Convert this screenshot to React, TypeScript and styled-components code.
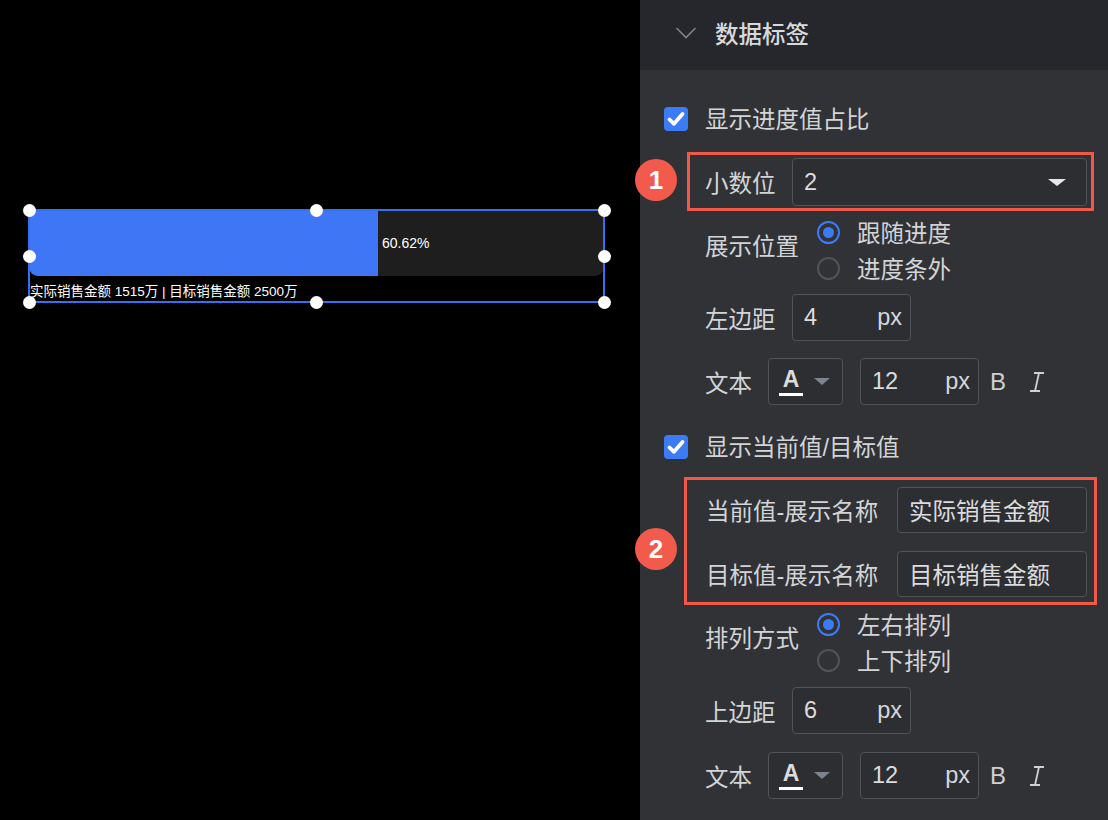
import React from "react";
import styled, { createGlobalStyle } from "styled-components";

const Global = createGlobalStyle`
  html, body { margin: 0; padding: 0; background: #000; }
  body { font-family: "Liberation Sans", "Noto Sans CJK SC", sans-serif; }
  * { box-sizing: border-box; }
`;

const Page = styled.div`
  display: flex;
  width: 1108px;
  height: 820px;
  overflow: hidden;
`;

/* ---------- canvas ---------- */
const Canvas = styled.div`
  width: 640px;
  height: 820px;
  background: #000;
  padding: 210px 0 0 29px;
`;

const Widget = styled.div`
  position: relative;
  width: 575px;
  height: 92px;
  font-family: "Liberation Sans", "Noto Sans CJK SC", sans-serif;
  color: #fff;
`;

const Track = styled.div`
  display: flex;
  align-items: center;
  height: 66px;
  background: #1e1e1e;
  border-radius: 0 0 9px 9px;
  overflow: hidden;
`;

const Fill = styled.div`
  height: 100%;
  background: #3e76f6;
`;

const Pct = styled.span`
  margin-left: 4px;
  font-size: 14px;
`;

const Caption = styled.div`
  margin-top: 7px;
  padding-left: 1px;
  font-size: 13.5px;
  line-height: 17px;
  white-space: nowrap;
`;

const Frame = styled.div`
  position: absolute;
  inset: -1px;
  border: 2px solid #3370f2;
  pointer-events: none;
`;

const Handle = styled.span<{ $x: number; $y: number }>`
  position: absolute;
  left: ${(p) => p.$x}%;
  top: ${(p) => p.$y}%;
  width: 13px;
  height: 13px;
  margin: -6.5px 0 0 -6.5px;
  border-radius: 50%;
  background: #fff;
`;

/* ---------- panel ---------- */
const Panel = styled.div`
  flex: 1;
  background: #303236;
  color: #d3d4d6;
  font-size: 23.5px;
  font-family: "Liberation Sans", "Noto Sans CJK SC", sans-serif;
`;

const Header = styled.div`
  height: 70px;
  background: #25272d;
  display: flex;
  align-items: center;
  padding: 0 0 4px 35px;
  gap: 18px;
  color: #d8d9db;
  font-size: 23.5px;
  font-weight: 500;
`;

const Body = styled.div`
  display: flex;
  flex-direction: column;
  padding-left: 24px;
`;

const CheckRow = styled.label<{ $mt: number }>`
  display: flex;
  align-items: center;
  height: 40px;
  margin-top: ${(p) => p.$mt}px;
  gap: 17px;
`;

const CheckText = styled.span`
  margin-bottom: 3px;
`;

const CheckBox = styled.span`
  width: 24px;
  height: 24px;
  border-radius: 4px;
  background: #3b7bf6;
  display: flex;
  align-items: center;
  justify-content: center;
`;

const Annot = styled.div<{ $mt: number; $ml: number; $pl: number; $pr: number; $pt: number; $pb: number; $w: number }>`
  position: relative;
  margin-top: ${(p) => p.$mt}px;
  margin-left: ${(p) => p.$ml}px;
  width: ${(p) => p.$w}px;
  border: 3px solid #f0594a;
  padding: ${(p) => `${p.$pt}px ${p.$pr}px ${p.$pb}px ${p.$pl}px`};
  display: flex;
  flex-direction: column;
  gap: 18px;
`;

const Badge = styled.span<{ $l: number; $t: number }>`
  position: absolute;
  left: ${(p) => p.$l}px;
  top: ${(p) => p.$t}px;
  width: 42px;
  height: 42px;
  border-radius: 50%;
  background: #f25b4b;
  color: #fff;
  font-size: 26px;
  font-weight: bold;
  display: flex;
  align-items: center;
  justify-content: center;
`;

const FieldRow = styled.div<{ $mt?: number; $ml?: number; $h: number }>`
  display: flex;
  align-items: center;
  height: ${(p) => p.$h}px;
  margin-top: ${(p) => p.$mt ?? 0}px;
  margin-left: ${(p) => p.$ml ?? 0}px;
`;

const Label = styled.span<{ $w: number; $lift?: number }>`
  width: ${(p) => p.$w}px;
  flex: none;
  white-space: nowrap;
  margin-bottom: ${(p) => p.$lift ?? 0}px;
`;

const Box = styled.div<{ $w: number; $h: number }>`
  width: ${(p) => p.$w}px;
  height: ${(p) => p.$h}px;
  flex: none;
  border: 1.5px solid #505358;
  border-radius: 4px;
  background: #2c2e32;
  display: flex;
  align-items: center;
  padding: 0 8px 0 11px;
  color: #dcdcde;
  white-space: nowrap;
`;

const Value = styled.span`
  flex: 1;
`;

const Unit = styled.span`
  color: #d6d7d9;
`;

const Tri = styled.span<{ $c: string; $w: number }>`
  width: 0;
  height: 0;
  border-left: ${(p) => p.$w / 2}px solid transparent;
  border-right: ${(p) => p.$w / 2}px solid transparent;
  border-top: ${(p) => p.$w * 0.42}px solid ${(p) => p.$c};
`;

const RadioGroupRow = styled.div<{ $mt: number }>`
  display: flex;
  align-items: center;
  margin-top: ${(p) => p.$mt}px;
  margin-left: 41px;
`;

const RadioCol = styled.div`
  display: flex;
  flex-direction: column;
`;

const RadioItem = styled.div`
  display: flex;
  align-items: center;
  height: 36px;
  gap: 17px;
`;

const Radio = styled.span<{ $on?: boolean }>`
  width: 23px;
  height: 23px;
  border-radius: 50%;
  border: 2px solid ${(p) => (p.$on ? "#3b7bf6" : "#505358")};
  display: flex;
  align-items: center;
  justify-content: center;
  &::after {
    content: "";
    width: 11px;
    height: 11px;
    border-radius: 50%;
    background: ${(p) => (p.$on ? "#3b7bf6" : "transparent")};
  }
`;

const ColorBox = styled(Box)`
  padding: 0 12px 0 10px;
  justify-content: space-between;
`;

const ColorA = styled.span`
  display: flex;
  flex-direction: column;
  align-items: center;
  font-weight: bold;
  font-size: 23px;
  line-height: 22px;
  color: #dcdcde;
  &::after {
    content: "";
    width: 24px;
    height: 3px;
    margin-top: 3px;
    background: #fff;
  }
`;

const StyleBtn = styled.span<{ $ml: number }>`
  display: flex;
  align-items: center;
  margin-left: ${(p) => p.$ml}px;
  font-size: 24px;
  color: #cfd0d2;
  font-family: "Liberation Sans", sans-serif;
`;

const Check = () => (
  <svg width="20" height="20" viewBox="0 0 20 20">
    <path d="M3.5 10.5 L8 14.8 L16.5 5" fill="none" stroke="#fff" strokeWidth="3.8" strokeLinecap="round" strokeLinejoin="round" />
  </svg>
);

const ItalicIcon = () => (
  <svg width="18" height="22" viewBox="0 0 18 22">
    <path d="M6 2 H16 M2 20 H12 M11 2 L7 20" fill="none" stroke="#cfd0d2" strokeWidth="1.8" />
  </svg>
);

const TextRow = ({ mt }: { mt: number }) => (
  <FieldRow $mt={mt} $ml={41} $h={47}>
    <Label $w={63}>文本</Label>
    <ColorBox $w={75} $h={47}>
      <ColorA>A</ColorA>
      <Tri $c="#7d8390" $w={17} />
    </ColorBox>
    <Box $w={119} $h={47} style={{ marginLeft: 17 }}>
      <Value>12</Value>
      <Unit>px</Unit>
    </Box>
    <StyleBtn $ml={11}>B</StyleBtn>
    <StyleBtn $ml={22}><ItalicIcon /></StyleBtn>
  </FieldRow>
);

export default function App() {
  const handles = [
    [0, 0], [50, 0], [100, 0],
    [0, 50], [100, 50],
    [0, 100], [50, 100], [100, 100],
  ];
  return (
    <Page>
      <Global />
      <Canvas>
        <Widget>
          <Track>
            <Fill style={{ width: `${(349 / 575) * 100}%` }} />
            <Pct>60.62%</Pct>
          </Track>
          <Caption>实际销售金额 1515万 | 目标销售金额 2500万</Caption>
          <Frame />
          {handles.map(([x, y], i) => (
            <Handle key={i} $x={x} $y={y} />
          ))}
        </Widget>
      </Canvas>
      <Panel>
        <Header>
          <svg width="22" height="14" viewBox="0 0 22 14">
            <path d="M1.5 2 L11 11.5 L20.5 2" fill="none" stroke="#80848c" strokeWidth="1.6" />
          </svg>
          <span>数据标签</span>
        </Header>
        <Body>
          <CheckRow $mt={29}>
            <CheckBox><Check /></CheckBox>
            <CheckText>显示进度值占比</CheckText>
          </CheckRow>

          <Annot $mt={13} $ml={23} $w={407} $pl={15} $pr={4} $pt={3} $pb={2}>
            <Badge $l={-55} $t={4}>1</Badge>
            <FieldRow $h={48}>
              <Label $w={87}>小数位</Label>
              <Box $w={295} $h={48} style={{ paddingRight: 20 }}>
                <Value>2</Value>
                <Tri $c="#e6e6e8" $w={19} />
              </Box>
            </FieldRow>
          </Annot>

          <RadioGroupRow $mt={3}>
            <Label $w={112} $lift={10}>展示位置</Label>
            <RadioCol>
              <RadioItem><Radio $on /><span>跟随进度</span></RadioItem>
              <RadioItem><Radio /><span>进度条外</span></RadioItem>
            </RadioCol>
          </RadioGroupRow>

          <FieldRow $mt={8} $ml={41} $h={47}>
            <Label $w={87}>左边距</Label>
            <Box $w={119} $h={47}>
              <Value>4</Value>
              <Unit>px</Unit>
            </Box>
          </FieldRow>

          <TextRow mt={17} />

          <CheckRow $mt={22}>
            <CheckBox><Check /></CheckBox>
            <CheckText>显示当前值/目标值</CheckText>
          </CheckRow>

          <Annot $mt={10} $ml={20} $w={413} $pl={19} $pr={7} $pt={7} $pb={5}>
            <Badge $l={-52} $t={48}>2</Badge>
            <FieldRow $h={46}>
              <Label $w={191}>当前值-展示名称</Label>
              <Box $w={190} $h={46}>
                <Value>实际销售金额</Value>
              </Box>
            </FieldRow>
            <FieldRow $h={46}>
              <Label $w={191}>目标值-展示名称</Label>
              <Box $w={190} $h={46}>
                <Value>目标销售金额</Value>
              </Box>
            </FieldRow>
          </Annot>

          <RadioGroupRow $mt={1}>
            <Label $w={112} $lift={10}>排列方式</Label>
            <RadioCol>
              <RadioItem><Radio $on /><span>左右排列</span></RadioItem>
              <RadioItem><Radio /><span>上下排列</span></RadioItem>
            </RadioCol>
          </RadioGroupRow>

          <FieldRow $mt={9} $ml={41} $h={47}>
            <Label $w={87}>上边距</Label>
            <Box $w={119} $h={47}>
              <Value>6</Value>
              <Unit>px</Unit>
            </Box>
          </FieldRow>

          <TextRow mt={18} />
        </Body>
      </Panel>
    </Page>
  );
}
